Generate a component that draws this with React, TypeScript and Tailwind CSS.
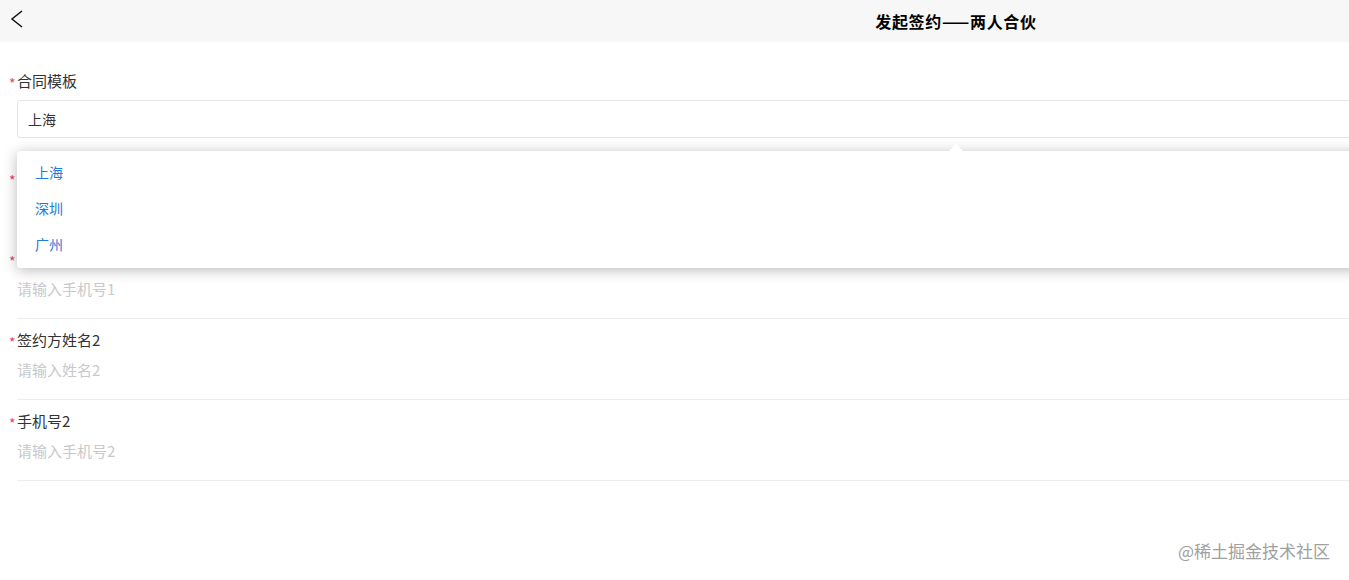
import { useState } from 'react';

type Field = {
  label: string;
  placeholder: string;
};

const fields: Field[] = [
  { label: '签约方姓名1', placeholder: '请输入姓名1' },
  { label: '手机号1', placeholder: '请输入手机号1' },
  { label: '签约方姓名2', placeholder: '请输入姓名2' },
  { label: '手机号2', placeholder: '请输入手机号2' },
];

const templates = ['上海', '深圳', '广州'];

function Label({ text }: { text: string }) {
  return (
    <div className="relative h-[22px] text-[15px] leading-[22px] text-[#323233]">
      <span className="absolute -left-[8px] top-[2px] text-[14px] leading-[22px] text-[#e2475b]">*</span>
      {text}
    </div>
  );
}

export default function App() {
  const [template, setTemplate] = useState('上海');

  return (
    <div
      className="relative h-[580px] w-full overflow-hidden bg-white"
      style={{ fontFamily: '"Noto Sans CJK SC", "Noto Sans", sans-serif' }}
    >
      <div className="w-[1912px]">
        <header className="relative flex h-[42px] items-center justify-center bg-[#f7f7f7]">
          <button type="button" className="absolute left-[9px] top-[9px]">
            <svg width="16" height="22" viewBox="0 0 16 22" fill="none">
              <path d="M13 2 L3 10 L13 18" stroke="#111" strokeWidth="1.5" />
            </svg>
          </button>
          <h1 className="text-[16px] font-bold tracking-[0.7px] text-black">发起签约——两人合伙</h1>
        </header>

        <main className="px-[17px] pt-[18px]">
          <div className="relative border-b border-[#ebedf0] pt-[10px] pb-[18px]">
            <Label text="合同模板" />
            <div className="mt-[8px] flex h-[38px] items-center rounded-[3px] border border-[#e4e4e4] px-[10px] text-[14px] text-[#323233]">
              {template}
            </div>

            {/* options popover */}
            <div className="absolute inset-x-0 top-[91px] z-10 flex flex-col rounded-[4px] bg-white pt-[3px] pb-[6px] shadow-[0_2px_14px_rgba(0,0,0,0.28)]">
              <div className="absolute -top-[7px] left-1/2 h-0 w-0 -translate-x-1/2 border-x-[7px] border-b-[7px] border-x-transparent border-b-white" />
              {templates.map((item) => (
                <button
                  key={item}
                  type="button"
                  onClick={() => setTemplate(item)}
                  className="flex h-[36px] w-full items-center px-[18px] text-left text-[14px] text-[#1e7bd6]"
                >
                  {item}
                </button>
              ))}
            </div>
          </div>

          {fields.map((field) => (
            <div key={field.label} className="flex flex-col gap-[8px] border-b border-[#ebedf0] pt-[10px] pb-[18px]">
              <Label text={field.label} />
              <div className="h-[22px] text-[15px] leading-[22px] text-[#c8c9cc]">{field.placeholder}</div>
            </div>
          ))}
        </main>
      </div>

      <div className="absolute bottom-[17px] right-[19px] text-[17px] text-[#a0a0a0]">@稀土掘金技术社区</div>
    </div>
  );
}
